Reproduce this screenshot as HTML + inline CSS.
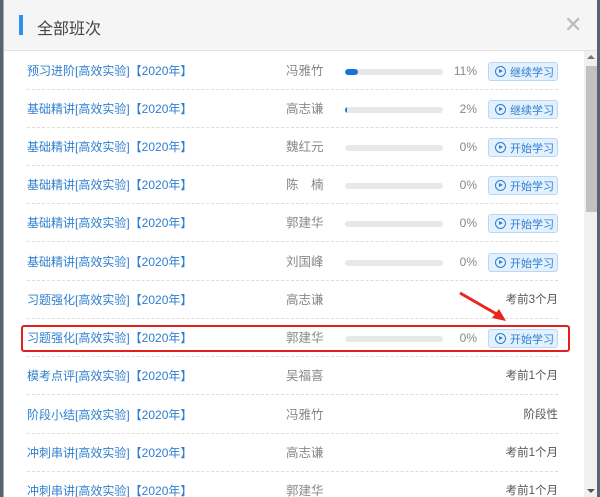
<!DOCTYPE html>
<html><head><meta charset="utf-8"><style>
*{margin:0;padding:0;box-sizing:border-box}
html,body{width:600px;height:497px;overflow:hidden}
body{background:#5a6470;font-family:"Liberation Sans","Noto Sans CJK SC",sans-serif;position:relative}
.modal{position:absolute;left:3px;top:0;width:594px;height:497px;background:#fff;border-left:1px solid #aaa;overflow:hidden}
.hd{position:absolute;left:0;top:0;width:594px;height:51px;background:#f5f5f5;border-bottom:1px solid #e2e2e2}
.bar{position:absolute;left:15px;top:15px;width:4px;height:20px;background:#2f8ff0}
.title{position:absolute;left:33px;top:15px;font-size:16px;color:#444}
.x{position:absolute;left:560px;top:12px;font-size:22px;color:#bbb}
.row{position:absolute;left:23px;width:531px;height:38px;border-bottom:1px dashed #ddd;font-size:12px}
.row span{position:absolute;top:12px;line-height:14px;white-space:nowrap}
.n{left:0;color:#2f7fd0}
.t{left:259px;color:#888;font-size:12.5px}
.pb{position:absolute;left:318px;top:17px;width:98px;height:6px;border-radius:3px;background:#e8e8e8;overflow:hidden}
.pb i{display:block;height:6px;background:#1a73d8;border-radius:3px}
.p{right:81px;color:#888}
.btn{position:absolute;left:461px;top:10px;width:70px;height:19px;background:#e3f0fd;border:1px solid #b8d8f6;border-radius:3px;color:#2f7fd0;font-size:11px;display:flex;align-items:center;padding-left:21px;padding-top:1px;white-space:nowrap}
.btn b{position:absolute;left:6px;top:3px;width:11px;height:11px;border:1px solid #2f7fd0;border-radius:50%}
.btn b:after{content:"";position:absolute;left:3px;top:2px;border-left:4px solid #2f7fd0;border-top:2.5px solid transparent;border-bottom:2.5px solid transparent}
.r{right:0;color:#555;font-size:11.5px}
.sb{position:absolute;left:580px;top:51px;width:14px;height:446px;background:#f0f0f0}
.th{position:absolute;left:2px;top:15px;width:11px;height:146px;background:#c1c1c1}
</style></head><body>
<div class="modal">
<div class="hd"><div class="bar"></div><div class="title">全部班次</div><div class="x">✕</div></div>

<div class="row" style="top:52px"><span class="n">预习进阶[高效实验]【2020年】</span><span class="t">冯雅竹</span><div class="pb"><i style="width:13px"></i></div><span class="p">11%</span><div class="btn"><b></b>继续学习</div></div>
<div class="row" style="top:90px"><span class="n">基础精讲[高效实验]【2020年】</span><span class="t">高志谦</span><div class="pb"><i style="width:2px"></i></div><span class="p">2%</span><div class="btn"><b></b>继续学习</div></div>
<div class="row" style="top:128px"><span class="n">基础精讲[高效实验]【2020年】</span><span class="t">魏红元</span><div class="pb"></div><span class="p">0%</span><div class="btn"><b></b>开始学习</div></div>
<div class="row" style="top:166px"><span class="n">基础精讲[高效实验]【2020年】</span><span class="t">陈　楠</span><div class="pb"></div><span class="p">0%</span><div class="btn"><b></b>开始学习</div></div>
<div class="row" style="top:204px"><span class="n">基础精讲[高效实验]【2020年】</span><span class="t">郭建华</span><div class="pb"></div><span class="p">0%</span><div class="btn"><b></b>开始学习</div></div>
<div class="row" style="top:243px"><span class="n">基础精讲[高效实验]【2020年】</span><span class="t">刘国峰</span><div class="pb"></div><span class="p">0%</span><div class="btn"><b></b>开始学习</div></div>
<div class="row" style="top:281px"><span class="n">习题强化[高效实验]【2020年】</span><span class="t">高志谦</span><span class="r">考前3个月</span></div>
<div class="row" style="top:319px"><span class="n">习题强化[高效实验]【2020年】</span><span class="t">郭建华</span><div class="pb"></div><span class="p">0%</span><div class="btn"><b></b>开始学习</div></div>
<div class="row" style="top:357px"><span class="n">模考点评[高效实验]【2020年】</span><span class="t">吴福喜</span><span class="r">考前1个月</span></div>
<div class="row" style="top:396px"><span class="n">阶段小结[高效实验]【2020年】</span><span class="t">冯雅竹</span><span class="r">阶段性</span></div>
<div class="row" style="top:434px"><span class="n">冲刺串讲[高效实验]【2020年】</span><span class="t">高志谦</span><span class="r">考前1个月</span></div>
<div class="row" style="top:472px"><span class="n">冲刺串讲[高效实验]【2020年】</span><span class="t">郭建华</span><span class="r">考前1个月</span></div>

<div style="position:absolute;left:17px;top:325px;width:549px;height:27px;border:2px solid #e0201c;border-radius:3px"></div>
<svg style="position:absolute;left:450px;top:288px" width="60" height="40"><line x1="6" y1="5" x2="46" y2="28" stroke="#e8261e" stroke-width="3"/><polygon points="52,33 38,30 45,21" fill="#e8261e"/></svg>
<div class="sb"><div style="position:absolute;left:3px;top:4px;border-bottom:4px solid #777;border-left:4px solid transparent;border-right:4px solid transparent"></div><div class="th"></div><div style="position:absolute;left:3px;bottom:4px;border-top:4px solid #555;border-left:4px solid transparent;border-right:4px solid transparent"></div></div>
</div>
</body></html>
